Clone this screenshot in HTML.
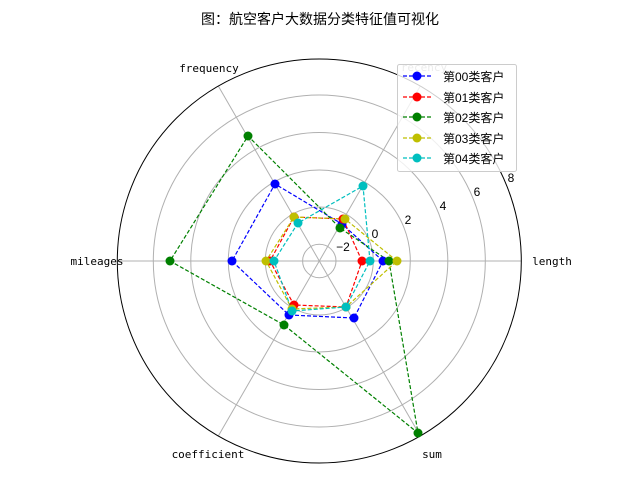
<!DOCTYPE html>
<html><head><meta charset="utf-8"><style>
html,body{margin:0;padding:0;background:#fff;width:640px;height:480px;overflow:hidden}
svg{display:block}
text{font-family:"Liberation Sans","Noto Sans CJK SC",sans-serif;fill:#000}
.m{font-family:"DejaVu Sans Mono","Liberation Mono",monospace;font-size:11px}
</style></head><body>
<svg width="640" height="480" viewBox="0 0 640 480">
<text x="320" y="24" text-anchor="middle" font-size="14">图：航空客户大数据分类特征值可视化</text>
<g fill="none" stroke="#b0b0b0" stroke-width="1">
<circle cx="319.3" cy="261" r="16.7"/>
<circle cx="319.3" cy="261" r="54"/>
<circle cx="319.3" cy="261" r="91"/>
<circle cx="319.3" cy="261" r="128.5"/>
<circle cx="319.3" cy="261" r="166"/>
<line x1="319.3" y1="261" x2="521.3" y2="261"/>
<line x1="319.3" y1="261" x2="420.3" y2="86"/>
<line x1="319.3" y1="261" x2="218.3" y2="86"/>
<line x1="319.3" y1="261" x2="117.3" y2="261"/>
<line x1="319.3" y1="261" x2="218.3" y2="436"/>
<line x1="319.3" y1="261" x2="420.3" y2="436"/>
</g>
<circle cx="319.3" cy="261" r="202" fill="none" stroke="#000" stroke-width="1"/>
<g class="m">
<text x="552" y="265" text-anchor="middle" class="m">length</text>
<text x="424" y="71" text-anchor="middle" class="m" style="fill:#999">recency</text>
<text x="209" y="72" text-anchor="middle" class="m">frequency</text>
<text x="97" y="265" text-anchor="middle" class="m">mileages</text>
<text x="208" y="458" text-anchor="middle" class="m">coefficient</text>
<text x="432" y="458" text-anchor="middle" class="m">sum</text>
</g>
<g font-size="12" text-anchor="middle">
<text x="343" y="251">−2</text><text x="375" y="238">0</text><text x="408" y="224">2</text>
<text x="443" y="210">4</text><text x="477" y="196">6</text><text x="511" y="182">8</text>
</g>
<g fill="none" stroke-width="1.2" stroke-dasharray="4,2">
<polygon stroke="#0000ff" points="383,261 342,224 275,184 232,261 289,315 354,318"/>
<polygon stroke="#ff0000" points="362,261 343,219 294,217 270,261 294,305 346,307"/>
<polygon stroke="#008000" points="389,261 340,228 248,136 170,261 284,325 418,433"/>
<polygon stroke="#bfbf00" points="397,261 345,219 294,217 266,261 292,309 346,307"/>
<polygon stroke="#00bfbf" points="370,261 363,186 298,223 274,261 292,311 346,307"/>
</g>
<g fill="#0000ff"><circle cx="383" cy="261" r="4.5"/><circle cx="342" cy="224" r="4.5"/><circle cx="275" cy="184" r="4.5"/><circle cx="232" cy="261" r="4.5"/><circle cx="289" cy="315" r="4.5"/><circle cx="354" cy="318" r="4.5"/></g>
<g fill="#ff0000"><circle cx="362" cy="261" r="4.5"/><circle cx="343" cy="219" r="4.5"/><circle cx="294" cy="217" r="4.5"/><circle cx="270" cy="261" r="4.5"/><circle cx="294" cy="305" r="4.5"/><circle cx="346" cy="307" r="4.5"/></g>
<g fill="#008000"><circle cx="389" cy="261" r="4.5"/><circle cx="340" cy="228" r="4.5"/><circle cx="248" cy="136" r="4.5"/><circle cx="170" cy="261" r="4.5"/><circle cx="284" cy="325" r="4.5"/><circle cx="418" cy="433" r="4.5"/></g>
<g fill="#bfbf00"><circle cx="397" cy="261" r="4.5"/><circle cx="345" cy="219" r="4.5"/><circle cx="294" cy="217" r="4.5"/><circle cx="266" cy="261" r="4.5"/><circle cx="292" cy="309" r="4.5"/><circle cx="346" cy="307" r="4.5"/></g>
<g fill="#00bfbf"><circle cx="370" cy="261" r="4.5"/><circle cx="363" cy="186" r="4.5"/><circle cx="298" cy="223" r="4.5"/><circle cx="274" cy="261" r="4.5"/><circle cx="292" cy="311" r="4.5"/><circle cx="346" cy="307" r="4.5"/></g>
<rect x="397.5" y="64.5" width="119" height="107" rx="2" fill="#fff" fill-opacity="0.8" stroke="#ccc"/>
<g stroke-width="1.2" stroke-dasharray="4,2">
<line x1="403" y1="76" x2="431" y2="76" stroke="#0000ff"/>
<line x1="403" y1="97" x2="431" y2="97" stroke="#ff0000"/>
<line x1="403" y1="117" x2="431" y2="117" stroke="#008000"/>
<line x1="403" y1="138" x2="431" y2="138" stroke="#bfbf00"/>
<line x1="403" y1="158" x2="431" y2="158" stroke="#00bfbf"/>
</g>
<circle cx="417" cy="76" r="4.5" fill="#0000ff"/>
<circle cx="417" cy="97" r="4.5" fill="#ff0000"/>
<circle cx="417" cy="117" r="4.5" fill="#008000"/>
<circle cx="417" cy="138" r="4.5" fill="#bfbf00"/>
<circle cx="417" cy="158" r="4.5" fill="#00bfbf"/>
<g font-size="12">
<text x="443" y="81">第00类客户</text>
<text x="443" y="102">第01类客户</text>
<text x="443" y="122">第02类客户</text>
<text x="443" y="143">第03类客户</text>
<text x="443" y="163">第04类客户</text>
</g>
</svg>
</body></html>
